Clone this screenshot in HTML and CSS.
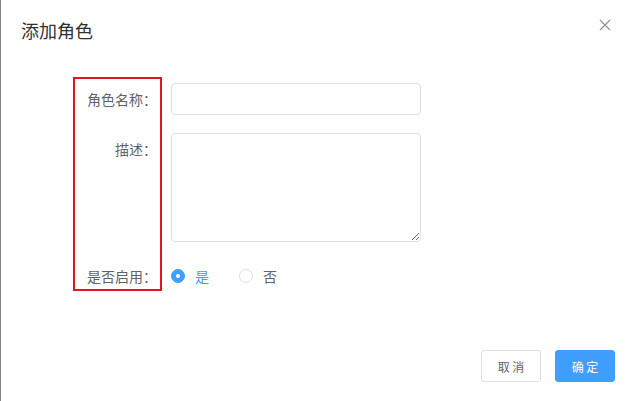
FILE: index.html
```html
<!DOCTYPE html>
<html lang="zh-CN">
<head>
  <meta charset="UTF-8">
  <title>添加角色</title>
  <link rel="stylesheet" href="styles.css">
</head>
<body>
  <div class="dialog">
    <!-- Header -->
    <div class="dialog-header">
      <span class="dialog-title">添加角色</span>
      <button class="dialog-close" aria-label="关闭">
        <svg width="12" height="12" viewBox="0 0 12 12">
          <path d="M1 1 L11 11 M11 1 L1 11" stroke="#909399" stroke-width="1.2" fill="none"/>
        </svg>
      </button>
    </div>

    <!-- Form -->
    <form class="role-form">
      <div class="form-row">
        <label class="form-label">角色名称：</label>
        <input class="form-input" type="text">
      </div>
      <div class="form-row">
        <label class="form-label">描述：</label>
        <textarea class="form-textarea"></textarea>
      </div>
      <div class="form-row">
        <label class="form-label">是否启用：</label>
        <div class="radio-group">
          <span class="radio checked"><span class="radio-dot"></span><span class="radio-text">是</span></span>
          <span class="radio"><span class="radio-dot"></span><span class="radio-text">否</span></span>
        </div>
      </div>
    </form>

    <!-- annotation over the labels -->
    <div class="label-highlight"></div>

    <!-- Footer -->
    <div class="dialog-footer">
      <button class="btn">取 消</button>
      <button class="btn btn-primary">确 定</button>
    </div>
  </div>
</body>
</html>
```

FILE: styles.css
```css
body {
  margin: 0;
  font-family: "Noto Sans CJK SC", "Liberation Sans", sans-serif;
  background: #ffffff;
  color: #606266;
}

.dialog {
  position: relative;
  display: flex;
  flex-direction: column;
  height: 100vh;
  box-sizing: border-box;
  border-left: 1px solid #858585;
}

.dialog-header {
  display: flex;
  justify-content: space-between;
  align-items: center;
  padding: 18px 20px 0 20px;
  height: 24px;
}

.dialog-title {
  font-size: 18px;
  line-height: 24px;
  color: #303133;
}

.dialog-close {
  border: none;
  background: none;
  padding: 0;
  margin-right: 2px;
  margin-top: -10px;
  width: 12px;
  height: 12px;
  display: flex;
  cursor: pointer;
}

.role-form {
  margin-top: 41px;
  padding-left: 70px;
  display: flex;
  flex-direction: column;
  gap: 18px;
}

.form-row {
  display: flex;
  align-items: flex-start;
}

.form-label {
  width: 100px;
  box-sizing: border-box;
  padding-right: 14px;
  text-align: right;
  font-size: 14px;
  line-height: 32px;
  color: #606266;
}

.form-input,
.form-textarea {
  width: 250px;
  box-sizing: border-box;
  border: 1px solid #dcdfe6;
  border-radius: 4px;
  font-family: inherit;
  font-size: 14px;
  padding: 0 15px;
  outline: none;
}

.form-input {
  height: 32px;
}

.form-textarea {
  height: 109px;
  padding: 5px 15px;
  resize: vertical;
}

.radio-group {
  display: flex;
  align-items: center;
  height: 32px;
}

.radio {
  display: flex;
  align-items: center;
  margin-right: 30px;
  font-size: 14px;
  color: #606266;
}

.radio-dot {
  width: 14px;
  height: 14px;
  box-sizing: border-box;
  border: 1px solid #dcdfe6;
  border-radius: 50%;
  background: #fff;
  position: relative;
}

.radio-text {
  padding-left: 10px;
}

.radio.checked .radio-dot {
  border-color: #409eff;
  background: #409eff;
}

.radio.checked .radio-dot::after {
  content: "";
  position: absolute;
  left: 4px;
  top: 4px;
  width: 4px;
  height: 4px;
  border-radius: 50%;
  background: #fff;
}

.radio.checked .radio-text {
  color: #409eff;
}

.label-highlight {
  position: absolute;
  left: 72px;
  top: 77px;
  width: 89px;
  height: 214px;
  box-sizing: border-box;
  border: 2px solid #e3141f;
}

.dialog-footer {
  margin-top: auto;
  display: flex;
  justify-content: flex-end;
  gap: 14px;
  padding: 0 18px 19px 0;
}

.btn {
  width: 60px;
  height: 32px;
  box-sizing: border-box;
  border: 1px solid #dcdfe6;
  border-radius: 3px;
  background: #fff;
  color: #606266;
  font-family: inherit;
  font-size: 12px;
  padding: 0;
  cursor: pointer;
}

.btn-primary {
  background: #409eff;
  border-color: #409eff;
  color: #fff;
}
```
